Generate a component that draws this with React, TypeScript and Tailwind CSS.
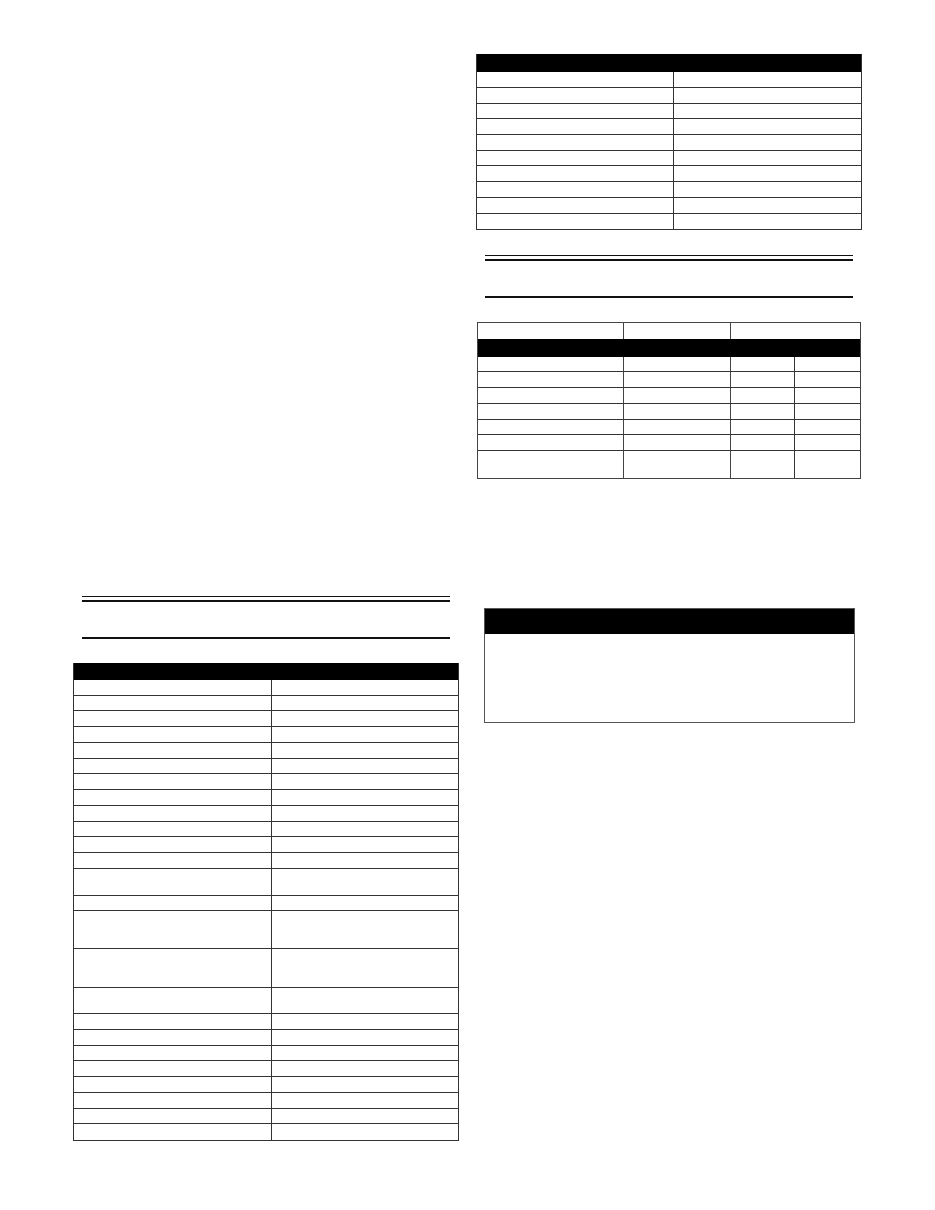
import { FC } from 'react'

// row heights include the 1px bottom border
const leftRows = [
  'h-[16px]', 'h-[15px]', 'h-[16px]', 'h-[16px]', 'h-[16px]', 'h-[15px]', 'h-[16px]', 'h-[16px]', 'h-[16px]', 'h-[15px]', 'h-[16px]', 'h-[16px]',
  'h-[27px]', 'h-[15px]', 'h-[38px]', 'h-[39px]', 'h-[26px]',
  'h-[16px]', 'h-[16px]', 'h-[15px]', 'h-[16px]', 'h-[16px]', 'h-[16px]', 'h-[15px]', 'h-[16px]',
]
const rightRows = ['h-[16px]', 'h-[16px]', 'h-[15px]', 'h-[16px]', 'h-[16px]', 'h-[15px]', 'h-[16px]', 'h-[16px]', 'h-[16px]', 'h-[15px]']
const specRows = ['h-[15px]', 'h-[16px]', 'h-[16px]', 'h-[16px]', 'h-[15px]', 'h-[16px]', 'h-[27px]']

const SectionRule: FC = () => (
  <div className="ml-[9px] w-[368px]">
    <div className="border-t border-[#111]" />
    <div className="mt-[3px] border-t-2 border-[#111]" />
    <div className="h-[35px]" />
    <div className="border-t-2 border-[#111]" />
  </div>
)

export default function App() {
  return (
    <div className="w-[935px] h-[1210px] bg-white flex font-['Liberation_Sans',Arial,sans-serif] text-[11px] text-black">
      {/* left column */}
      <div className="pl-[73px] w-[459px] pt-[596px] flex flex-col">
        <SectionRule />
        <div className="mt-[24px] w-[386px] border-x border-b border-[#333]">
          <div className="h-[17px] bg-black" />
          {leftRows.map((h, i) => (
            <div key={i} className={`${h} flex border-b border-[#333] last:border-b-0`}>
              <div className="w-[198px] border-r border-[#333]" />
              <div className="flex-1" />
            </div>
          ))}
        </div>
      </div>

      {/* right column */}
      <div className="ml-[17px] pt-[54px] flex flex-col">
        <div className="w-[386px] border-x border-b border-[#333]">
          <div className="h-[18px] bg-black" />
          {rightRows.map((h, i) => (
            <div key={i} className={`${h} flex border-b border-[#333] last:border-b-0`}>
              <div className="w-[197px] border-r border-[#333]" />
              <div className="flex-1" />
            </div>
          ))}
        </div>

        <div className="mt-[25px]">
          <SectionRule />
        </div>

        <div className="mt-[24px] ml-[1px] w-[384px] border border-[#444]">
          <div className="h-[16px] flex">
            <div className="w-[146px] border-r border-[#444]" />
            <div className="w-[107px] border-r border-[#444]" />
            <div className="flex-1" />
          </div>
          <div className="h-[18px] bg-black" />
          {specRows.map((h, i) => (
            <div key={i} className={`${h} flex border-b border-[#333] last:border-b-0`}>
              <div className="w-[146px] border-r border-[#444]" />
              <div className="w-[107px] border-r border-[#444]" />
              <div className="w-[64px] border-r border-[#333]" />
              <div className="flex-1" />
            </div>
          ))}
        </div>

        <div className="mt-[129px] ml-[8px] w-[371px] h-[115px] border border-[#555] flex flex-col">
          <div className="h-[25px] bg-black" />
        </div>
      </div>
    </div>
  )
}
